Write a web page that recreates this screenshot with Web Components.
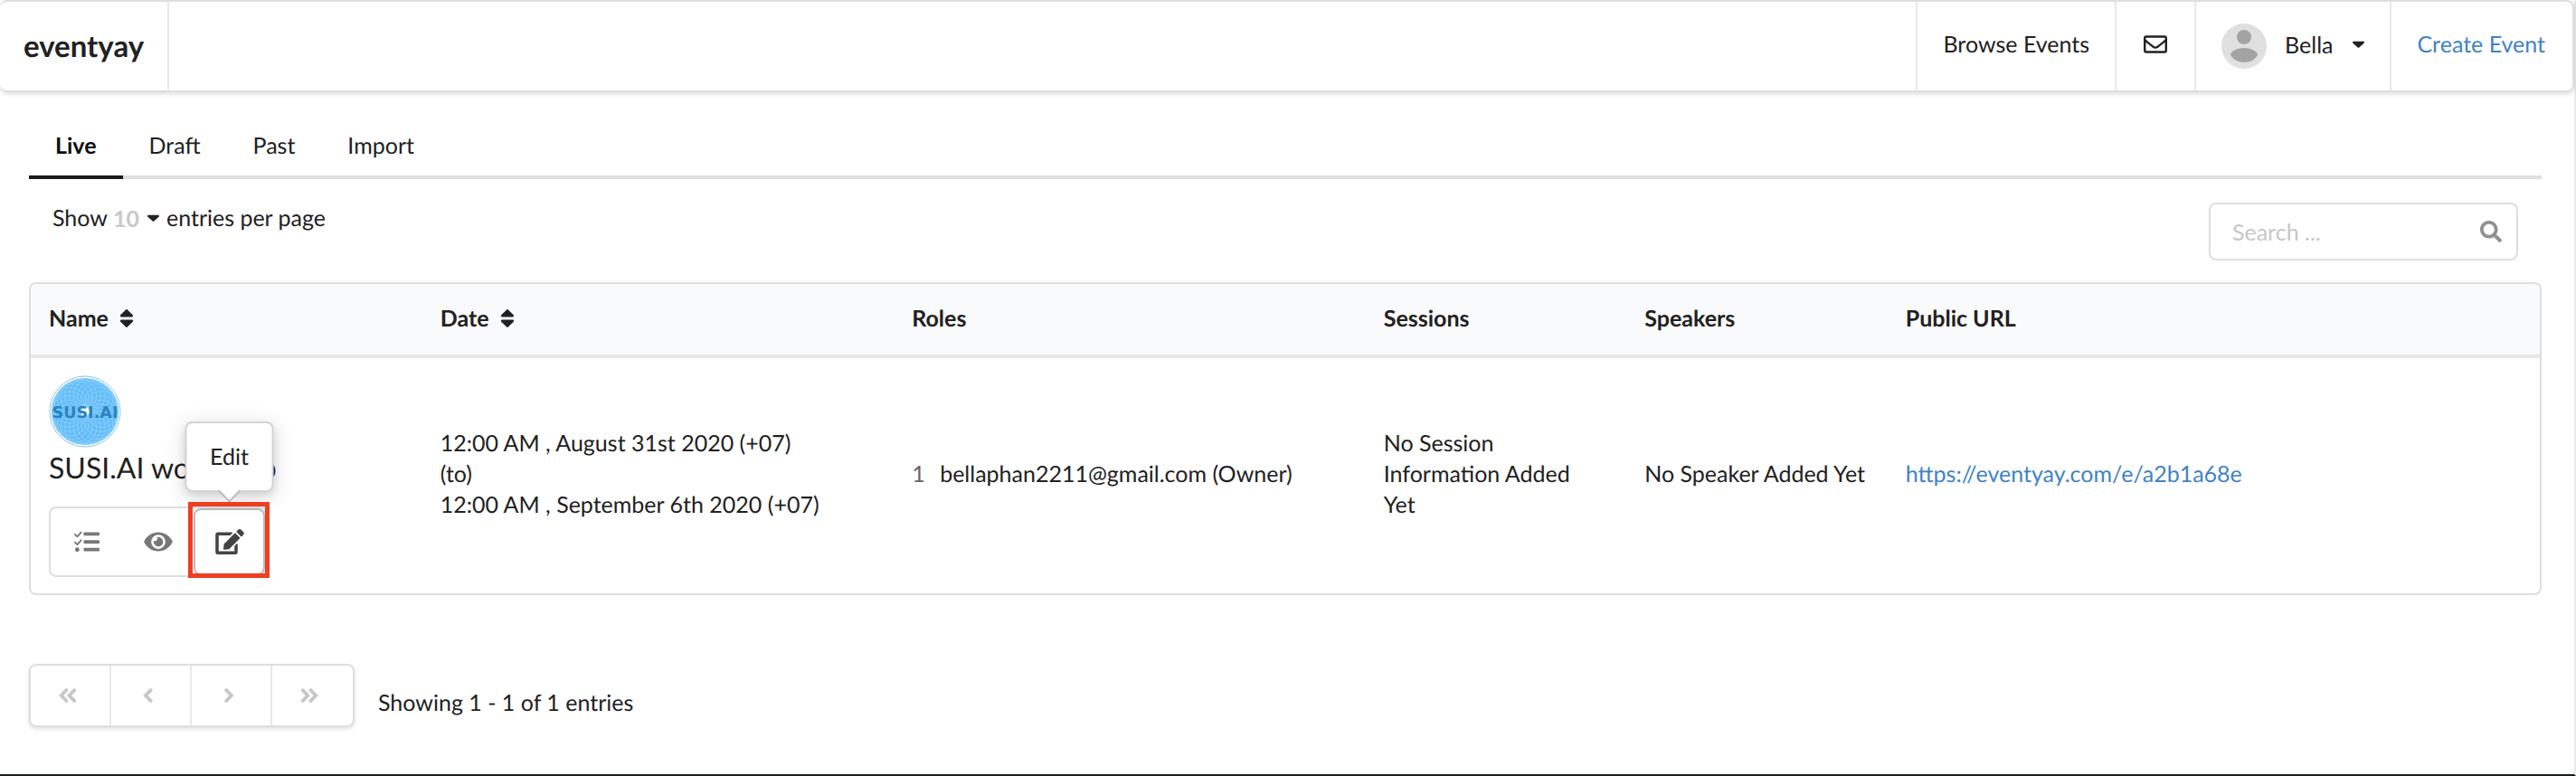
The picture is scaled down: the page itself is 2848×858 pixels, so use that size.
<!DOCTYPE html>
<html lang="en">
<head>
<meta charset="utf-8">
<title>eventyay</title>
<style>
    html, body {
        margin: 0;
        min-height: 100vh;
    }

    body {
        font-family: Lato, sans-serif;
        font-size: 25px;
        line-height: 34px;
        text-rendering: geometricPrecision;
        color: #212121;
        background: #fff;
    }
</style>
</head>
<body>
<events-page></events-page>

<script>
const icons = {
    mail: ['0 0 512 512', '<path d="M464 64H48C21 64 0 85 0 112v288c0 27 21 48 48 48h416c27 0 48-21 48-48V112c0-27-21-48-48-48zm0 48v41c-22 18-58 47-134 106-17 13-50 45-74 44-24 1-57-31-74-44C106 200 70 171 48 153v-41h416zM48 400V214c23 18 55 43 105 82 22 17 60 56 103 55 43 1 81-37 103-55 50-39 82-64 105-82v186H48z"/>'],
    caret: ['0 0 320 200', '<path d="M31 20h258c27 0 39 31 20 50L180 185c-11 10-29 10-40 0L11 70C-8 51 4 20 31 20z"/>'],
    sort: ['0 0 320 512', '<path d="M41 288h238c21 0 32 26 17 41L177 448c-9 9-25 9-34 0L24 329c-15-15-4-41 17-41zm255-105L177 64c-9-9-25-9-34 0L24 183c-15 15-4 41 17 41h238c21 0 32-26 17-41z"/>'],
    search: ['0 0 512 512', '<path d="M505 443L405 343c-4-4-11-7-17-7h-16c28-35 44-80 44-128C416 93 323 0 208 0S0 93 0 208s93 208 208 208c48 0 93-16 128-44v16c0 6 3 13 7 17l100 100c9 9 24 9 34 0l28-28c9-10 9-25 0-34zM208 336c-71 0-128-57-128-128S137 80 208 80s128 57 128 128-57 128-128 128z"/>'],
    tasks: ['0 0 512 512', '<path d="M18 106l44 46L140 66M18 266l44 46 78-86" fill="none" stroke="currentColor" stroke-width="34" stroke-linecap="round" stroke-linejoin="round"/><circle cx="62" cy="416" r="44"/><rect x="192" y="64" width="320" height="70" rx="16"/><rect x="192" y="222" width="320" height="70" rx="16"/><rect x="192" y="380" width="320" height="70" rx="16"/>'],
    eye: ['0 0 576 512', '<path d="M572 241C518 136 411 64 288 64S58 136 4 241a32 32 0 0 0 0 30c54 105 161 177 284 177s230-72 284-177a32 32 0 0 0 0-30zM288 400a144 144 0 1 1 0-288 144 144 0 0 1 0 288zm0-240c-9 0-17 1-25 4a48 48 0 0 1-67 67A96 96 0 1 0 288 160z"/>'],
    edit: ['0 0 576 512', '<path d="M403 83l90 90c4 4 4 10 0 14L275 405l-93 10c-12 2-23-9-21-21l10-93L389 83c4-4 10-4 14 0zm162-23l-49-49c-15-15-40-15-55 0l-35 36c-4 4-4 10 0 14l90 90c4 4 10 4 14 0l35-36c15-15 15-40 0-55zM384 346v102H64V128h230c3 0 6-1 8-4l40-40c8-7 3-20-8-20H48C21 64 0 85 0 112v352c0 27 21 48 48 48h352c27 0 48-21 48-48V306c0-11-13-16-20-8l-40 40c-3 2-4 5-4 8z"/>'],
    first: ['0 0 448 512', '<path d="M190 136L75 256l115 120M370 136L255 256l115 120" fill="none" stroke="currentColor" stroke-width="78" stroke-linecap="round"/>'],
    prev: ['0 0 448 512', '<path d="M278 136L163 256l115 120" fill="none" stroke="currentColor" stroke-width="78" stroke-linecap="round"/>'],
    next: ['0 0 448 512', '<path d="M168 136l115 120-115 120" fill="none" stroke="currentColor" stroke-width="78" stroke-linecap="round"/>'],
    last: ['0 0 448 512', '<path d="M75 136l115 120L75 376M255 136l115 120-115 120" fill="none" stroke="currentColor" stroke-width="78" stroke-linecap="round"/>']
};

class UiIcon extends HTMLElement {
    constructor() {
        super();
        this.attachShadow({ mode: 'open' });
    }

    connectedCallback() {
        const [viewBox, shape] = icons[this.getAttribute('name')];
        this.shadowRoot.innerHTML = `
            <style>
                :host {
                    display: inline-flex;
                    width: 26px;
                    height: 26px;
                }

                svg {
                    width: 100%;
                    height: 100%;
                    fill: currentColor;
                }
            </style>
            <svg viewBox="${viewBox}" aria-hidden="true">${shape}</svg>
        `;
    }
}

class NavBar extends HTMLElement {
    constructor() {
        super();
        this.attachShadow({ mode: 'open' });
        this.shadowRoot.innerHTML = `
            <style>
                :host {
                    display: block;
                }

                nav {
                    display: flex;
                    height: 98px;
                    border: 2px solid #dededf;
                    border-left-width: 0;
                    border-radius: 8px;
                    box-shadow: 0 2px 4px rgba(34,36,38,0.15);
                }

                a, button {
                    display: flex;
                    align-items: center;
                    box-sizing: border-box;
                    padding: 0 28px 4px;
                    border: 0;
                    border-left: 2px solid #e8e8e9;
                    background: none;
                    font: inherit;
                    color: inherit;
                    text-decoration: none;
                }

                .brand {
                    margin-right: auto;
                    padding: 0 26px;
                    border-left: 0;
                    border-right: 2px solid #e8e8e9;
                    font-size: 33px;
                    font-weight: bold;
                }

                .create {
                    padding: 0 30px 4px 28px;
                    color: #4183c4;
                }

                .avatar {
                    width: 50px;
                    height: 50px;
                    margin-top: 4px;
                    margin-right: 20px;
                }

                .mail {
                    padding: 0 30px 4px;
                }

                .caret {
                    width: 13px;
                    height: 26px;
                    margin-left: 22px;
                }
            </style>
            <nav>
                <a class="brand" href="#">eventyay</a>
                <a href="#">Browse Events</a>
                <button class="mail" aria-label="Messages"><ui-icon name="mail"></ui-icon></button>
                <button>
                    <svg class="avatar" viewBox="0 0 50 50" aria-hidden="true">
                        <circle cx="25" cy="25" r="25" fill="#e0e0e0"/>
                        <circle cx="25" cy="15" r="8" fill="#a3a3a3"/>
                        <path d="M10 35c0-4 7-8 15-8s15 4 15 8c-3 5-9 8-15 8s-12-3-15-8z" fill="#a3a3a3"/>
                    </svg>
                    Bella
                    <ui-icon class="caret" name="caret"></ui-icon>
                </button>
                <a class="create" href="#">Create Event</a>
            </nav>
        `;
    }
}

class TabMenu extends HTMLElement {
    constructor() {
        super();
        this.attachShadow({ mode: 'open' });
        this.shadowRoot.innerHTML = `
            <style>
                :host {
                    display: flex;
                    border-bottom: 4px solid #dededf;
                }

                ::slotted(a) {
                    padding: 22px 29px 16px;
                    margin-bottom: -4px;
                    border-bottom: 4px solid transparent;
                    color: inherit;
                    text-decoration: none;
                }

                ::slotted(a[aria-current]) {
                    border-color: #1b1c1d;
                    color: #0d0d0d;
                    font-weight: bold;
                }
            </style>
            <slot></slot>
        `;
    }
}

class TableTools extends HTMLElement {
    constructor() {
        super();
        this.attachShadow({ mode: 'open' });
        this.shadowRoot.innerHTML = `
            <style>
                :host {
                    display: flex;
                    justify-content: space-between;
                    padding: 26px 26px 24px;
                }

                .size {
                    display: flex;
                    align-self: flex-start;
                    align-items: center;
                }

                select {
                    appearance: none;
                    margin-left: 6px;
                    padding: 0;
                    border: 0;
                    background: none;
                    font: inherit;
                    font-weight: bold;
                    color: #c8c8c8;
                }

                .size ui-icon {
                    width: 13px;
                    margin: 0 8px;
                }

                .search {
                    display: flex;
                    align-items: center;
                    box-sizing: border-box;
                    width: 342px;
                    height: 64px;
                    padding: 0 16px 0 24px;
                    border: 2px solid #dededf;
                    border-radius: 8px;
                }

                input {
                    flex: 1;
                    min-width: 0;
                    padding: 0;
                    border: 0;
                    outline: 0;
                    background: none;
                    font: inherit;
                    color: inherit;
                }

                input::placeholder {
                    color: #c7c7c7;
                }

                .search ui-icon {
                    width: 24px;
                    height: 24px;
                    color: #909090;
                }
            </style>
            <div class="size">
                <label for="size">Show</label>
                <select id="size"><option>10</option></select>
                <ui-icon name="caret"></ui-icon>
                <span>entries per page</span>
            </div>
            <div class="search">
                <input type="text" placeholder="Search ..." aria-label="Search">
                <ui-icon name="search"></ui-icon>
            </div>
        `;
    }
}

class EventLogo extends HTMLElement {
    constructor() {
        super();
        this.attachShadow({ mode: 'open' });
        let rings = '';
        for (let angle = 0; angle < 360; angle += 15) {
            rings += `<circle cx="41" cy="22" r="18" transform="rotate(${angle} 41 41)"/>`;
        }
        this.shadowRoot.innerHTML = `
            <style>
                :host {
                    display: block;
                    width: 80px;
                    height: 82px;
                }

                svg {
                    display: block;
                    width: 100%;
                    height: 100%;
                }

                text {
                    font: bold 18px "DejaVu Sans", sans-serif;
                    fill: #2c82c0;
                }
            </style>
            <svg viewBox="0 0 82 82">
                <circle cx="41" cy="41" r="40" fill="#fff" stroke="#7cc6f6" stroke-width="1"/>
                <circle cx="41" cy="41" r="38" fill="#62bdf8"/>
                <g fill="none" stroke="#9bd6fb" stroke-width="0.6">${rings}</g>
                <circle cx="41" cy="41" r="5" fill="#fff"/>
                <text x="41" y="48" text-anchor="middle">SUSI.AI</text>
            </svg>
        `;
    }
}

class ActionButton extends HTMLElement {
    constructor() {
        super();
        this.attachShadow({ mode: 'open' });
    }

    connectedCallback() {
        const label = this.getAttribute('label');
        this.shadowRoot.innerHTML = `
            <style>
                :host {
                    display: block;
                    position: relative;
                }

                button {
                    display: flex;
                    align-items: center;
                    justify-content: center;
                    width: 79px;
                    height: 74px;
                    padding: 0;
                    border: 0;
                    border-radius: 8px;
                    background: #fff;
                    color: #777;
                }

                ui-icon {
                    width: 32px;
                    height: 28px;
                }

                .tip {
                    display: none;
                    position: absolute;
                    bottom: 92px;
                    left: 50%;
                    transform: translateX(-50%);
                    padding: 20px 26px;
                    border: 2px solid #d4d4d5;
                    border-radius: 8px;
                    background: #fff;
                    box-shadow: 0 4px 24px rgba(34,36,38,0.15), 0 4px 8px rgba(34,36,38,0.12);
                }

                .tip::after {
                    content: "";
                    position: absolute;
                    bottom: -10px;
                    left: calc(50% - 9px);
                    width: 16px;
                    height: 16px;
                    transform: rotate(45deg);
                    border: solid #bababc;
                    border-width: 0 2px 2px 0;
                    background: #fff;
                }

                :host([active]) button {
                    border: 2px solid #babbbc;
                    color: #444;
                }

                :host([active]) .tip {
                    display: block;
                }

                :host([active])::after {
                    content: "";
                    position: absolute;
                    inset: -7px -5px -3px -6px;
                    border: 5px solid #ef3e23;
                }
            </style>
            <button aria-label="${label}"><ui-icon name="${this.getAttribute('icon')}"></ui-icon></button>
            <div class="tip" role="tooltip">${label}</div>
        `;
    }
}

class EventTable extends HTMLElement {
    constructor() {
        super();
        this.attachShadow({ mode: 'open' });
        this.shadowRoot.innerHTML = `
            <style>
                :host {
                    display: block;
                    border: 2px solid #dededf;
                    border-radius: 8px;
                }

                table {
                    width: 100%;
                    table-layout: fixed;
                    border-collapse: separate;
                    border-spacing: 0;
                }

                .name { width: 15.6%; }
                .wide { width: 18.8%; }
                .narrow { width: 10.4%; }

                th, td {
                    padding: 18px 16px 22px 20px;
                    text-align: left;
                }

                th {
                    padding: 21px 20px 23px;
                    border-bottom: 4px solid #e6e8e8;
                    background: #f9fafb;
                }

                th:first-child {
                    border-top-left-radius: 6px;
                }

                th:last-child {
                    border-top-right-radius: 6px;
                }

                th ui-icon {
                    width: 16px;
                    vertical-align: -4px;
                    margin-left: 6px;
                }

                td a {
                    color: #4183c4;
                    text-decoration: none;
                }

                td:first-child {
                    padding: 18px 20px;
                }

                .title {
                    font-size: 32px;
                    line-height: 42px;
                    white-space: nowrap;
                }

                .actions {
                    display: flex;
                    width: max-content;
                    margin-top: 22px;
                    border: 2px solid #dededf;
                    border-radius: 8px;
                }

                .count {
                    margin-right: 10px;
                    color: #666;
                }
            </style>
            <table>
                <colgroup>
                    <col class="name">
                    <col class="wide">
                    <col class="wide">
                    <col class="narrow">
                    <col class="narrow">
                    <col>
                </colgroup>
                <thead>
                    <tr>
                        <th>Name <ui-icon name="sort"></ui-icon></th>
                        <th>Date <ui-icon name="sort"></ui-icon></th>
                        <th>Roles</th>
                        <th>Sessions</th>
                        <th>Speakers</th>
                        <th>Public URL</th>
                    </tr>
                </thead>
                <tbody>
                    <tr>
                        <td>
                            <event-logo></event-logo>
                            <div class="title">SUSI.AI workshop</div>
                            <div class="actions">
                                <action-button icon="tasks" label="Manage"></action-button>
                                <action-button icon="eye" label="View"></action-button>
                                <action-button icon="edit" label="Edit" active></action-button>
                            </div>
                        </td>
                        <td>12:00 AM , August 31st 2020 (+07)<br>(to)<br>12:00 AM , September 6th 2020 (+07)</td>
                        <td><span class="count">1</span> bellaphan2211@gmail.com (Owner)</td>
                        <td>No Session<br>Information Added<br>Yet</td>
                        <td>No Speaker Added Yet</td>
                        <td><a href="https://eventyay.com/e/a2b1a68e">https://eventyay.com/e/a2b1a68e</a></td>
                    </tr>
                </tbody>
            </table>
        `;
    }
}

class TablePager extends HTMLElement {
    constructor() {
        super();
        this.attachShadow({ mode: 'open' });
        this.shadowRoot.innerHTML = `
            <style>
                :host {
                    display: flex;
                    align-items: center;
                    gap: 26px;
                }

                .pages {
                    display: flex;
                    border: 2px solid #dededf;
                    border-radius: 8px;
                    box-shadow: 0 2px 4px rgba(34,36,38,0.15);
                }

                button {
                    display: flex;
                    align-items: center;
                    box-sizing: border-box;
                    width: 89px;
                    height: 66px;
                    padding: 0 0 0 30px;
                    border: 0;
                    border-right: 2px solid #e8e8e9;
                    background: none;
                    color: #c7c7c7;
                }

                button:last-child {
                    border-right: 0;
                }

                ui-icon {
                    width: 22px;
                }

                .info {
                    margin-top: 16px;
                }
            </style>
            <div class="pages">
                <button aria-label="First page" disabled><ui-icon name="first"></ui-icon></button>
                <button aria-label="Previous page" disabled><ui-icon name="prev"></ui-icon></button>
                <button aria-label="Next page" disabled><ui-icon name="next"></ui-icon></button>
                <button aria-label="Last page" disabled><ui-icon name="last"></ui-icon></button>
            </div>
            <span class="info">Showing 1 - 1 of 1 entries</span>
        `;
    }
}

class EventsPage extends HTMLElement {
    constructor() {
        super();
        this.attachShadow({ mode: 'open' });
        this.shadowRoot.innerHTML = `
            <style>
                :host {
                    display: flex;
                    flex-direction: column;
                    box-sizing: border-box;
                    min-height: 100vh;
                    border-right: 2px solid #e8e8e9;
                    border-bottom: 2px solid #1b1c1d;
                }

                main {
                    padding: 20px 36px 48px 32px;
                }

                table-pager {
                    margin-top: 76px;
                }
            </style>
            <nav-bar></nav-bar>
            <main>
                <tab-menu>
                    <a href="#live" aria-current="page">Live</a>
                    <a href="#draft">Draft</a>
                    <a href="#past">Past</a>
                    <a href="#import">Import</a>
                </tab-menu>
                <table-tools></table-tools>
                <event-table></event-table>
                <table-pager></table-pager>
            </main>
        `;
    }
}

customElements.define('ui-icon', UiIcon);
customElements.define('nav-bar', NavBar);
customElements.define('tab-menu', TabMenu);
customElements.define('table-tools', TableTools);
customElements.define('event-logo', EventLogo);
customElements.define('action-button', ActionButton);
customElements.define('event-table', EventTable);
customElements.define('table-pager', TablePager);
customElements.define('events-page', EventsPage);
</script>
</body>
</html>
